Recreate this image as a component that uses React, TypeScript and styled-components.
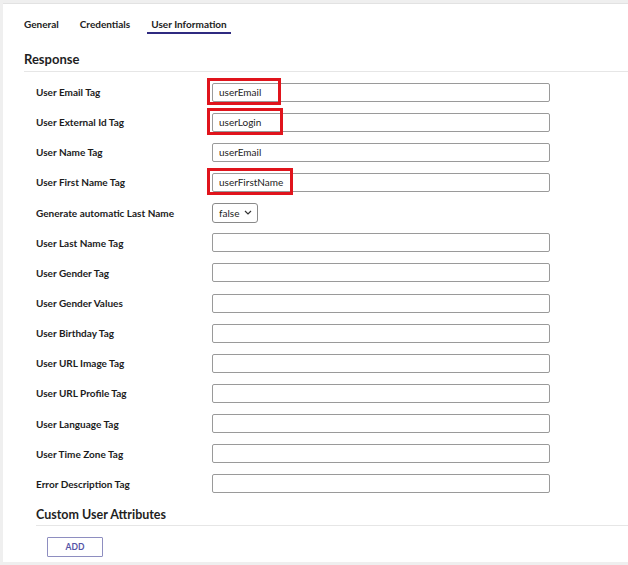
import styled, { createGlobalStyle } from "styled-components";

const GlobalStyle = createGlobalStyle`
  html, body {
    margin: 0;
    padding: 0;
    background: #efefef;
  }
  body {
    font-family: Lato, "Noto Sans", sans-serif;
    color: #1f1f1f;
  }
`;

const Panel = styled.div`
  margin: 3px 0 0 3px;
  height: 558px;
  background: #fff;
  border-top: 1px solid #e2e2e2;
  overflow: hidden;
`;

const Tabs = styled.div`
  display: flex;
  gap: 13px;
  padding-left: 17px;
`;

const Tab = styled.div<{ $active?: boolean }>`
  padding: 13px 4px 1px;
  line-height: 14px;
  font-size: 10px;
  font-weight: 700;
  color: #222;
  border-bottom: 2px solid ${(p) => (p.$active ? "#2f2a80" : "transparent")};
`;

const SectionTitle = styled.div`
  margin: 17px 0 0 21px;
  padding-bottom: 4px;
  font-size: 13px;
  font-weight: 700;
  line-height: 16px;
  border-bottom: 1px solid #e6e6e6;
`;

const Rows = styled.div`
  display: grid;
  grid-template-columns: 176px 338px;
  grid-auto-rows: 30.15px;
  padding: 5px 0 0 33px;
  align-items: center;
`;

const Label = styled.div`
  font-size: 10px;
  font-weight: 700;
  color: #1c1c1c;
  white-space: nowrap;
`;

const Field = styled.div`
  position: relative;
  height: 19px;
`;

const Input = styled.input`
  display: block;
  box-sizing: border-box;
  width: 100%;
  height: 19px;
  padding: 0 6px;
  border: 1px solid #9a9a9a;
  border-radius: 2px;
  font-family: Lato, "Noto Sans", sans-serif;
  font-size: 10px;
  color: #222;
  background: #fff;
  outline: none;
`;

const Mark = styled.div`
  position: absolute;
  box-sizing: border-box;
  left: -5px;
  top: -5px;
  height: 27px;
  border: 3px solid #e0141c;
  pointer-events: none;
`;

const Select = styled.div`
  box-sizing: border-box;
  width: 46px;
  height: 20px;
  border: 1px solid #8a8a8a;
  border-radius: 3px;
  display: flex;
  align-items: center;
  justify-content: space-between;
  padding: 0 5px 0 6px;
  font-size: 10px;
  color: #222;
`;

const SubTitle = styled.div`
  margin: 8px 0 0 33px;
  padding-bottom: 2px;
  font-size: 12.5px;
  font-weight: 700;
  line-height: 16px;
  border-bottom: 1px solid #e6e6e6;
`;

const AddButton = styled.button`
  display: block;
  margin: 11px 0 0 44px;
  width: 56px;
  height: 20px;
  background: #fff;
  border: 1px solid #8e8ec0;
  border-radius: 1px;
  color: #5454a6;
  font-family: Lato, "Noto Sans", sans-serif;
  font-size: 8.5px;
  font-weight: 700;
  padding: 0;
`;

type Row = { label: string; value?: string; mark?: number; select?: boolean };

const rows: Row[] = [
  { label: "User Email Tag", value: "userEmail", mark: 74 },
  { label: "User External Id Tag", value: "userLogin", mark: 76 },
  { label: "User Name Tag", value: "userEmail" },
  { label: "User First Name Tag", value: "userFirstName", mark: 86 },
  { label: "Generate automatic Last Name", select: true },
  { label: "User Last Name Tag" },
  { label: "User Gender Tag" },
  { label: "User Gender Values" },
  { label: "User Birthday Tag" },
  { label: "User URL Image Tag" },
  { label: "User URL Profile Tag" },
  { label: "User Language Tag" },
  { label: "User Time Zone Tag" },
  { label: "Error Description Tag" },
];

const Chevron = () => (
  <svg width="8" height="5" viewBox="0 0 8 5" fill="none">
    <path d="M1 1l3 3 3-3" stroke="#333" strokeWidth="1.2" />
  </svg>
);

export default function App() {
  return (
    <>
      <GlobalStyle />
      <Panel>
        <Tabs>
          <Tab>General</Tab>
          <Tab>Credentials</Tab>
          <Tab $active>User Information</Tab>
        </Tabs>
        <SectionTitle>Response</SectionTitle>
        <Rows>
          {rows.map((r) => (
            <>
              <Label key={r.label}>{r.label}</Label>
              {r.select ? (
                <Select>
                  <span>false</span>
                  <Chevron />
                </Select>
              ) : (
                <Field>
                  <Input defaultValue={r.value ?? ""} />
                  {r.mark && <Mark style={{ width: r.mark }} />}
                </Field>
              )}
            </>
          ))}
        </Rows>
        <SubTitle>Custom User Attributes</SubTitle>
        <AddButton>ADD</AddButton>
      </Panel>
    </>
  );
}
